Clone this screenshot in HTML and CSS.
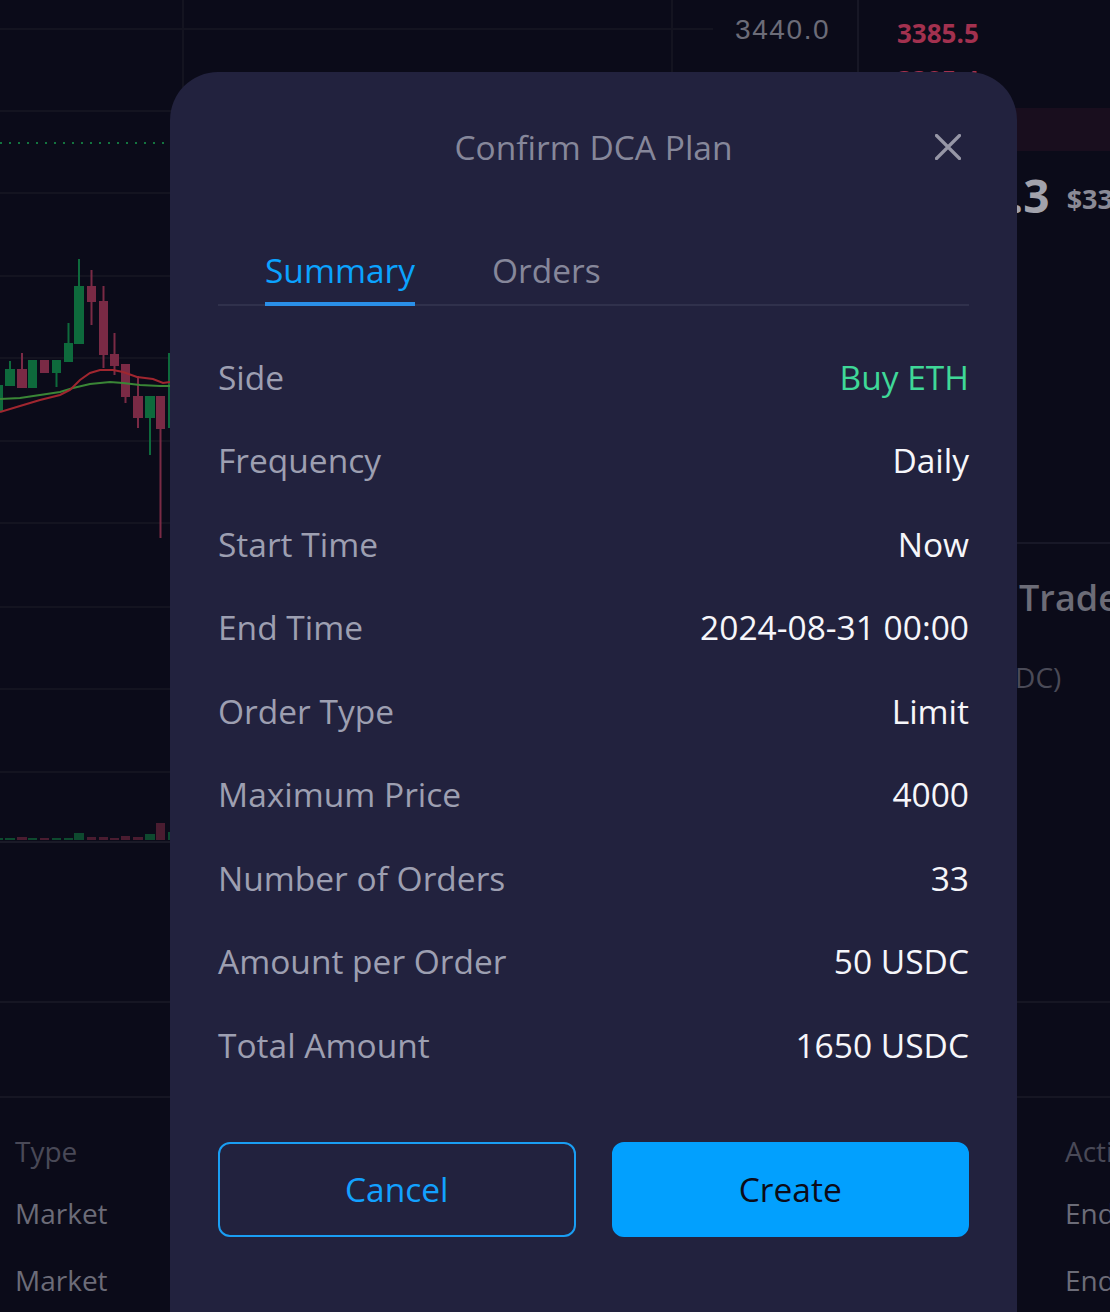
FILE: index.html
```html
<!DOCTYPE html>
<html lang="en">
<head>
<meta charset="utf-8">
<title>Confirm DCA Plan</title>
<link rel="stylesheet" href="styles.css">
</head>
<body>
<div class="app">
  <div class="top">
    <div class="chart">
      <svg class="chart-svg" width="857" height="1001" viewBox="0 0 857 1001">
        <g class="grid">
          <line x1="0" y1="29" x2="713" y2="29"/>
          <line x1="0" y1="111" x2="713" y2="111"/>
          <line x1="0" y1="193" x2="713" y2="193"/>
          <line x1="0" y1="276" x2="713" y2="276"/>
          <line x1="0" y1="358" x2="713" y2="358"/>
          <line x1="0" y1="441" x2="713" y2="441"/>
          <line x1="0" y1="523" x2="713" y2="523"/>
          <line x1="0" y1="607" x2="713" y2="607"/>
          <line x1="0" y1="689" x2="713" y2="689"/>
          <line x1="0" y1="772" x2="713" y2="772"/>
          <line x1="183" y1="0" x2="183" y2="842"/>
          <line x1="672" y1="0" x2="672" y2="842"/>
        </g>
        <line class="last-price" x1="0" y1="143" x2="170" y2="143"/>
        <text class="axis-label" x="735" y="39">3440.0</text>
        <g class="up">
          <rect x="0" y="385" width="3" height="26"/>
          <line x1="10" y1="361" x2="10" y2="386"/><rect x="5" y="369" width="10" height="17"/>
          <rect x="28" y="360" width="9" height="28"/>
          <line x1="56.5" y1="360" x2="56.5" y2="387"/><rect x="52" y="360" width="9" height="13"/>
          <line x1="68.5" y1="323" x2="68.5" y2="362"/><rect x="64" y="343" width="9" height="19"/>
          <line x1="79" y1="259" x2="79" y2="344"/><rect x="74" y="286" width="10" height="58"/>
          <line x1="150" y1="396" x2="150" y2="455"/><rect x="145" y="396" width="10" height="22"/>
          <line x1="169" y1="353" x2="169" y2="428"/>
        </g>
        <g class="down">
          <line x1="22" y1="353" x2="22" y2="388"/><rect x="17" y="369" width="10" height="19"/>
          <rect x="40" y="360" width="9" height="13"/>
          <line x1="91.5" y1="270" x2="91.5" y2="325"/><rect x="87" y="286" width="9" height="16"/>
          <line x1="103.5" y1="286" x2="103.5" y2="368"/><rect x="99" y="301" width="9" height="54"/>
          <line x1="114.5" y1="333" x2="114.5" y2="375"/><rect x="110" y="354" width="9" height="12"/>
          <line x1="125.5" y1="364" x2="125.5" y2="403"/><rect x="121" y="364" width="9" height="33"/>
          <line x1="138" y1="376" x2="138" y2="428"/><rect x="133" y="396" width="10" height="22"/>
          <line x1="160.5" y1="396" x2="160.5" y2="538"/><rect x="156" y="396" width="9" height="33"/>
        </g>
        <path class="ma-green" d="M0 399 L20 398 L40 395 L60 392 L73 388 L90 384 L110 382 L123 383 L140 385 L160 386 L170 386"/>
        <path class="ma-red" d="M0 412 L20 406 L40 400 L60 395 L70 390 L80 380 L90 373 L100 370 L113 370 L123 372 L137 377 L153 379 L163 383 L170 382"/>
        <g class="vol-up">
          <rect x="0" y="838" width="3" height="2"/>
          <rect x="5" y="838" width="10" height="2"/>
          <rect x="28" y="838" width="9" height="2"/>
          <rect x="52" y="838" width="9" height="2"/>
          <rect x="64" y="838" width="9" height="2"/>
          <rect x="74" y="833" width="10" height="7"/>
          <rect x="145" y="834" width="10" height="6"/>
          <rect x="168" y="832" width="2" height="8"/>
        </g>
        <g class="vol-down">
          <rect x="17" y="837" width="10" height="3"/>
          <rect x="40" y="838" width="9" height="2"/>
          <rect x="87" y="837" width="9" height="3"/>
          <rect x="99" y="837" width="9" height="3"/>
          <rect x="110" y="838" width="9" height="2"/>
          <rect x="121" y="836" width="9" height="4"/>
          <rect x="133" y="837" width="10" height="3"/>
          <rect x="156" y="823" width="9" height="17"/>
        </g>
        <line class="vol-base" x1="0" y1="842" x2="857" y2="842"/>
      </svg>
    </div>
    <aside class="side">
      <div class="book">
        <div class="ask">3385.5</div>
        <div class="ask">3385.4</div>
        <div class="ask depth">3385.3</div>
        <div class="mid"><span class="mid-price">3385.3</span><span class="mid-usd">$3385.3</span></div>
      </div>
      <div class="trade">
        <div class="trade-title">Trade</div>
        <div class="trade-label">Amount (USDC)</div>
      </div>
    </aside>
  </div>
  <div class="panel-tabs"></div>
  <div class="orders">
    <div class="orders-row head"><span>Type</span><span>Action</span></div>
    <div class="orders-row first"><span>Market</span><span>Ended</span></div>
    <div class="orders-row second"><span>Market</span><span>Ended</span></div>
  </div>
</div>

<div class="overlay">
  <section class="modal">
    <header class="modal-head">
      <span></span>
      <h2 class="modal-title">Confirm DCA Plan</h2>
      <button class="close" aria-label="Close">
        <svg width="26" height="26" viewBox="0 0 26 26"><path d="M1.5 1.5 L24.5 24.5 M24.5 1.5 L1.5 24.5"/></svg>
      </button>
    </header>
    <nav class="tabs">
      <span class="tab active">Summary</span>
      <span class="tab">Orders</span>
    </nav>
    <div class="rows">
      <div class="row"><span class="label">Side</span><span class="value buy">Buy ETH</span></div>
      <div class="row"><span class="label">Frequency</span><span class="value">Daily</span></div>
      <div class="row"><span class="label">Start Time</span><span class="value">Now</span></div>
      <div class="row"><span class="label">End Time</span><span class="value">2024-08-31 00:00</span></div>
      <div class="row"><span class="label">Order Type</span><span class="value">Limit</span></div>
      <div class="row"><span class="label">Maximum Price</span><span class="value">4000</span></div>
      <div class="row"><span class="label">Number of Orders</span><span class="value">33</span></div>
      <div class="row"><span class="label">Amount per Order</span><span class="value">50 USDC</span></div>
      <div class="row"><span class="label">Total Amount</span><span class="value">1650 USDC</span></div>
    </div>
    <div class="actions">
      <button class="btn btn-outline">Cancel</button>
      <button class="btn btn-primary">Create</button>
    </div>
  </section>
</div>
</body>
</html>
```

FILE: styles.css
```css
* { box-sizing: border-box; }

html, body {
  margin: 0;
  padding: 0;
}

body {
  width: 1110px;
  height: 1312px;
  overflow: hidden;
  background: #0b0b19;
  font-family: "Open Sans", "Noto Sans", sans-serif;
  color: #f4f4f8;
  position: relative;
}

.app {
  width: 1110px;
  height: 1312px;
  overflow: hidden;
}

.top {
  display: flex;
  height: 1003px;
  border-bottom: 2px solid #161623;
}

.chart {
  width: 857px;
  flex: none;
}

.chart-svg { display: block; }

.grid line { stroke: #141420; stroke-width: 2; }
.last-price { stroke: #13753f; stroke-width: 2; stroke-dasharray: 2 7; }
.axis-label {
  font-family: "Liberation Sans", Arial, sans-serif;
  font-size: 28px;
  letter-spacing: 1.6px;
  fill: #6c6c78;
}
.up rect { fill: #0e6a3c; }
.up line { stroke: #0e6a3c; stroke-width: 2; }
.down rect { fill: #7a2a45; }
.down line { stroke: #7a2a45; stroke-width: 2; }
.ma-red { fill: none; stroke: #a0262f; stroke-width: 2; }
.ma-green { fill: none; stroke: #3a8636; stroke-width: 2; }
.vol-up rect { fill: #0e4a2f; }
.vol-down rect { fill: #4a1c30; }
.vol-base { stroke: #1a1a27; stroke-width: 2; }

.side {
  flex: 1;
  min-width: 0;
  overflow: hidden;
  border-left: 2px solid #171725;
  display: flex;
  flex-direction: column;
}

.book {
  height: 544px;
  border-bottom: 2px solid #181827;
  padding-top: 10px;
}

.ask {
  height: 47px;
  line-height: 47px;
  padding-left: 38px;
  font-size: 26px;
  font-weight: 700;
  color: #a3314f;
}

.ask.depth {
  height: 43px;
  margin-top: 4px;
  line-height: 43px;
  background: #190e1e;
}

.mid {
  height: 88px;
  display: flex;
  align-items: center;
  padding-left: 46px;
  white-space: nowrap;
}

.mid-price {
  font-size: 46px;
  font-weight: 700;
  color: #a2a2ac;
}

.mid-usd {
  margin-left: 17px;
  font-size: 27px;
  font-weight: 700;
  color: #8a8a96;
  padding-top: 6px;
}

.trade {
  padding-top: 32px;
  white-space: nowrap;
}

.trade-title {
  padding-left: 160px;
  font-size: 36px;
  line-height: 44px;
  font-weight: 600;
  color: #6c6c77;
}

.trade-label {
  margin-top: 37px;
  padding-left: 0;
  font-size: 28px;
  line-height: 40px;
  color: #4a4a57;
}

.panel-tabs {
  height: 95px;
  border-bottom: 2px solid #161623;
}

.orders {
  padding-top: 33px;
  white-space: nowrap;
}

.orders-row {
  display: grid;
  grid-template-columns: 1050px auto;
  padding-left: 15px;
  font-size: 28px;
  line-height: 40px;
  color: #6c6c78;
}

.orders-row.head { color: #494957; }
.orders-row.first { margin-top: 22px; }
.orders-row.second { margin-top: 27px; }

/* Modal */
.overlay {
  position: absolute;
  inset: 0;
}

.modal {
  position: absolute;
  left: 170px;
  top: 72px;
  width: 847px;
  height: 1240px;
  background: #22223e;
  border-radius: 48px 48px 0 0;
  padding: 0 48px;
}

.modal-head {
  display: grid;
  grid-template-columns: 1fr auto 1fr;
  align-items: center;
  padding-top: 54px;
}

.modal-title {
  margin: 0;
  font-size: 33.5px;
  line-height: 42px;
  font-weight: 400;
  color: #86879a;
}

.close {
  justify-self: end;
  margin-right: 8px;
  width: 26px;
  height: 26px;
  padding: 0;
  border: 0;
  background: none;
  display: flex;
}

.close path {
  stroke: #9696a6;
  stroke-width: 3.2;
  stroke-linecap: round;
  fill: none;
}

.tabs {
  margin-top: 81px;
  display: flex;
  gap: 77px;
  padding-left: 47px;
  border-bottom: 2px solid #30314c;
}

.tab {
  font-size: 33.5px;
  line-height: 42px;
  padding-bottom: 11px;
  border-bottom: 4px solid transparent;
  margin-bottom: -2px;
  color: #86879a;
}

.tab.active {
  color: #0ba3ff;
  border-bottom-color: #2a8fe8;
}

.rows {
  padding-top: 29px;
}

.row {
  height: 83.5px;
  display: flex;
  align-items: center;
  justify-content: space-between;
  font-size: 33.5px;
  line-height: 44px;
}

.label { color: #9d9fb1; }
.value { color: #f6f6fa; }
.value.buy { color: #3fd898; }

.actions {
  margin-top: 55px;
  display: flex;
  gap: 36px;
}

.btn {
  flex: 1;
  height: 95px;
  border-radius: 12px;
  font-family: "Open Sans", "Noto Sans", sans-serif;
  font-size: 33.5px;
  cursor: pointer;
}

.btn-outline {
  background: transparent;
  border: 2px solid #1a9ef3;
  color: #13a1ff;
}

.btn-primary {
  background: #02a0fe;
  border: 2px solid #02a0fe;
  color: #0c0c18;
}
```
